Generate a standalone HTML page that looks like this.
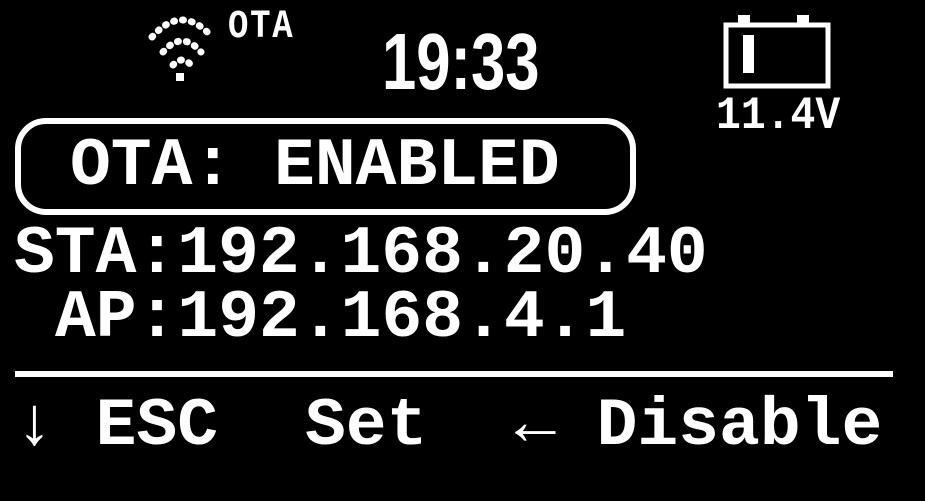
<!DOCTYPE html>
<html><head><style>
body{margin:0;width:925px;height:501px;background:#000;overflow:hidden;position:relative;color:#fff;font-family:"Liberation Mono","DejaVu Sans Mono",monospace;font-weight:bold}
.t{position:absolute;font-size:68px;line-height:68px;white-space:pre}
</style></head><body>
<svg width="925" height="501" style="position:absolute;left:0;top:0">
 <g fill="none" stroke="#fff" stroke-width="7" stroke-linecap="round" stroke-dasharray="1 8">
  <path d="M152 37 Q182 3 212 37"/>
  <path d="M163 52 Q182 30 201 52"/>
  <path d="M173 65 Q182 55 191 65"/>
 </g>
 <rect x="176" y="73" width="8" height="8" fill="#fff"/>
 <rect x="726" y="25" width="102" height="61" fill="none" stroke="#fff" stroke-width="5"/>
 <rect x="738" y="15" width="12" height="9" fill="#fff"/>
 <rect x="797" y="15" width="12" height="9" fill="#fff"/>
 <rect x="743" y="35" width="11" height="38" fill="#fff"/>
 <rect x="18" y="121" width="615" height="91" rx="28" fill="none" stroke="#fff" stroke-width="6"/>
 <rect x="15" y="371" width="878" height="6" fill="#fff"/>
</svg>
<div class="t" style="left:228px;top:8px;font-size:40px;line-height:40px;letter-spacing:2px;transform:scaleX(.85);transform-origin:left">OTA</div>
<div class="t" style="left:382px;top:21px;font-size:80px;line-height:82px;font-family:'Liberation Sans',sans-serif;transform:scaleX(.77);transform-origin:left">19:33</div>
<div class="t" style="left:716px;top:93px;font-size:46px;line-height:46px;transform:scaleX(.9);transform-origin:left">11.4V</div>
<div class="t" style="left:70px;top:133px">OTA: ENABLED</div>
<div class="t" style="left:14px;top:221px">STA:192.168.20.40</div>
<div class="t" style="left:55px;top:285px">AP:192.168.4.1</div>
<div class="t" style="left:14px;top:393px">↓ ESC</div>
<div class="t" style="left:305px;top:393px">Set</div>
<div class="t" style="left:515px;top:393px">← Disable</div>
</body></html>
